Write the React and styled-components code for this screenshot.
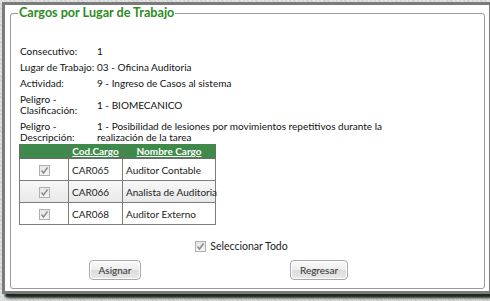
import React from 'react';
import styled, { createGlobalStyle } from 'styled-components';

const GlobalStyle = createGlobalStyle`
  html, body {
    margin: 0;
    padding: 0;
  }
  body {
    width: 490px;
    height: 301px;
    overflow: hidden;
    font-family: Lato, "Liberation Sans", sans-serif;
    background-color: #d6d6d6;
    background-image: repeating-linear-gradient(
      45deg,
      #cfcfcf 0px,
      #cfcfcf 1px,
      #e2e2e2 1px,
      #e2e2e2 3px
    );
  }
`;

const Window = styled.div`
  margin: 2px 0 0 2px;
  width: 475px;
  height: 285px;
  background: #fff;
  border: 3px solid #7b7b7b;
  box-shadow: 3px 3px 2px #1e261f, 5px 4px 3px #3c4a3e;
  padding: 1px 4px 0 5px;
  box-sizing: content-box;
`;

const Frame = styled.fieldset`
  margin: 0;
  padding: 0 8px 0 8px;
  height: 283px;
  box-sizing: border-box;
  border: 1px solid #9a9a9a;
  border-radius: 3px;
  display: flex;
  flex-direction: column;
`;

const Title = styled.legend`
  margin-left: -1px;
  padding: 0 1px;
  font-family: Lato, "Liberation Sans", sans-serif;
  font-weight: bold;
  font-size: 12.6px;
  line-height: 14px;
  color: #2e8b1e;
`;

const InfoGrid = styled.div`
  margin-top: 26px;
  margin-left: 1px;
  display: grid;
  grid-template-columns: 77px 290px;
  row-gap: 5px;
  align-items: center;
  font-size: 10px;
  line-height: 11px;
  color: #111;
`;

const Label = styled.div``;
const Value = styled.div``;

const Grid = styled.table`
  margin-top: 1px;
  border-collapse: collapse;
  table-layout: fixed;
  font-size: 10px;
  color: #222;
  width: 197px;
`;

const HeadCell = styled.th`
  width: ${p => p.$w || 'auto'};
  background: #3f8a4a;
  color: #fff;
  font-weight: bold;
  text-decoration: underline;
  height: 14px;
  padding: 0 2px;
  border: 1px solid #6b6b6b;
  border-top: none;
  font-size: 10px;
  line-height: 12px;
  text-align: center;
  white-space: nowrap;
`;

const Row = styled.tr`
  background: ${p => (p.$alt ? 'linear-gradient(#f7f7f7, #e8e8e8)' : '#fff')};
`;

const Cell = styled.td`
  height: 21px;
  padding: 0 3px;
  border: 1px solid #7d7d7d;
  text-align: ${p => (p.$center ? 'center' : 'left')};
  vertical-align: middle;
  white-space: nowrap;
`;

const Box = styled.span`
  display: inline-flex;
  align-items: center;
  justify-content: center;
  width: 9px;
  height: 9px;
  border: 1px solid #b0b0b0;
  background: linear-gradient(#e6e6e6, #f4f4f4);
  vertical-align: middle;
`;

const SelectAll = styled.div`
  margin-top: 15px;
  display: flex;
  justify-content: center;
  align-items: center;
  gap: 4px;
  font-size: 10.5px;
  color: #222;
  margin-left: -12px;
`;

const Buttons = styled.div`
  margin-top: 8px;
  display: grid;
  grid-template-columns: 204px 204px;
  justify-items: center;
  margin-left: -6px;
`;

const Button = styled.button`
  font-family: Lato, "Liberation Sans", sans-serif;
  font-size: 10px;
  color: #333;
  height: 20px;
  padding: 0 9px;
  border: 1px solid #a8a8a8;
  border-radius: 4px;
  background: linear-gradient(#fbfbfb 0%, #ececec 50%, #dcdcdc 51%, #e9e9e9 100%);
  box-shadow: inset 0 0 0 1px #fff;
`;

const Check = () => (
  <Box>
    <svg width="9" height="9" viewBox="0 0 9 9">
      <path d="M1.5 4.5 L3.5 7 L7.5 1.5" fill="none" stroke="#8a8a8a" strokeWidth="1.4" />
    </svg>
  </Box>
);

const info = [
  ['Consecutivo:', '1'],
  ['Lugar de Trabajo:', '03 - Oficina Auditoria'],
  ['Actividad:', '9 - Ingreso de Casos al sistema'],
  ['Peligro - Clasificación:', '1 - BIOMECANICO'],
  ['Peligro - Descripción:', '1 - Posibilidad de lesiones por movimientos repetitivos durante la realización de la tarea'],
];

const cargos = [
  ['CAR065', 'Auditor Contable'],
  ['CAR066', 'Analista de Auditoria'],
  ['CAR068', 'Auditor Externo'],
];

export default function App() {
  return (
    <>
      <GlobalStyle />
      <Window>
        <Frame>
          <Title>Cargos por Lugar de Trabajo</Title>
          <InfoGrid>
            {info.map(([label, value]) => (
              <React.Fragment key={label}>
                <Label>{label}</Label>
                <Value>{value}</Value>
              </React.Fragment>
            ))}
          </InfoGrid>
          <Grid>
            <thead>
              <tr>
                <HeadCell $w="44px"></HeadCell>
                <HeadCell $w="49px">Cod.Cargo</HeadCell>
                <HeadCell>Nombre Cargo</HeadCell>
              </tr>
            </thead>
            <tbody>
              {cargos.map(([cod, nombre], i) => (
                <Row key={cod} $alt={i === 1}>
                  <Cell $center><Check /></Cell>
                  <Cell>{cod}</Cell>
                  <Cell>{nombre}</Cell>
                </Row>
              ))}
            </tbody>
          </Grid>
          <SelectAll>
            <Check />
            <span>Seleccionar Todo</span>
          </SelectAll>
          <Buttons>
            <Button>Asignar</Button>
            <Button>Regresar</Button>
          </Buttons>
        </Frame>
      </Window>
    </>
  );
}
